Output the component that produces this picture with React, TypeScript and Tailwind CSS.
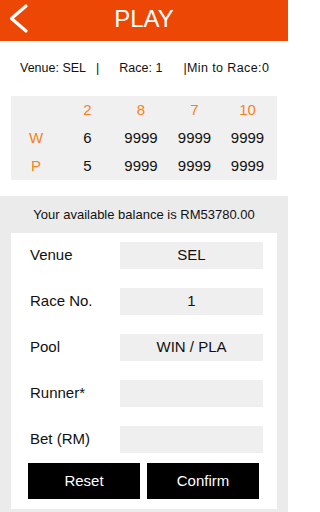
import React from "react";

const rows = [
  { label: "Venue", value: "SEL" },
  { label: "Race No.", value: "1" },
  { label: "Pool", value: "WIN / PLA" },
  { label: "Runner*", value: "" },
  { label: "Bet (RM)", value: "" },
];

export default function App() {
  const font = { fontFamily: '"Liberation Sans", Arial, sans-serif' };
  return (
    <div className="w-[288px] h-[512px] bg-white overflow-hidden flex flex-col" style={font}>
      <div className="relative h-[41px] bg-[#ec4705] flex items-center justify-center shrink-0">
        <svg className="absolute left-0 top-0" width="40" height="41" viewBox="0 0 40 41">
          <polyline points="26,6 11.5,18.5 26,31" fill="none" stroke="#ffffff" strokeWidth="3.2" strokeLinecap="round" strokeLinejoin="round" />
        </svg>
        <span className="text-white text-[24px] leading-none mt-[-4px]">PLAY</span>
      </div>

      <div className="h-[55px] flex items-center text-[12.5px] text-[#111] shrink-0 whitespace-nowrap">
        <span className="ml-[20px]">Venue: SEL</span>
        <span className="ml-[10px]">|</span>
        <span className="ml-[20px]">Race: 1</span>
        <span className="ml-[21px] tracking-[0.4px]">|Min to Race:0</span>
      </div>

      <div className="mx-[11px] h-[84px] bg-[#f0f0f0] text-[15px] shrink-0">
        <div className="grid grid-cols-[50px_53px_54px_53px_53px] h-[28px] items-center text-center text-[#f7801e]">
          <span></span>
          <span>2</span>
          <span>8</span>
          <span>7</span>
          <span>10</span>
        </div>
        <div className="grid grid-cols-[50px_53px_54px_53px_53px] h-[28px] items-center text-center text-[#111]">
          <span className="text-[#f7801e]">W</span>
          <span>6</span>
          <span>9999</span>
          <span>9999</span>
          <span>9999</span>
        </div>
        <div className="grid grid-cols-[50px_53px_54px_53px_53px] h-[28px] items-center text-center text-[#111]">
          <span className="text-[#f7801e]">P</span>
          <span>5</span>
          <span>9999</span>
          <span>9999</span>
          <span>9999</span>
        </div>
      </div>

      <div className="h-[16px] shrink-0"></div>

      <div className="flex-1 bg-[#ebebeb] flex flex-col">
        <div className="h-[37px] flex items-center justify-center text-[13px] text-[#111] shrink-0">
          Your available balance is RM53780.00
        </div>
        <div className="w-[266px] ml-[11px] bg-white pt-[9px] pb-[10px]">
          <div className="pl-[19px] pr-[14px] flex flex-col gap-[19px]">
            {rows.map((r) => (
              <div key={r.label} className="flex items-center h-[27px]">
                <span className="w-[90px] text-[15px] text-[#111]">{r.label}</span>
                <div className="flex-1 h-[27px] bg-[#efefef] flex items-center justify-center text-[15px] text-[#111]">
                  {r.value}
                </div>
              </div>
            ))}
          </div>
          <div className="mt-[10px] pl-[17px] pr-[18px] flex gap-[7px]">
            <button className="flex-1 h-[36px] bg-black text-white text-[15px]">Reset</button>
            <button className="flex-1 h-[36px] bg-black text-white text-[15px]">Confirm</button>
          </div>
        </div>
      </div>
    </div>
  );
}
